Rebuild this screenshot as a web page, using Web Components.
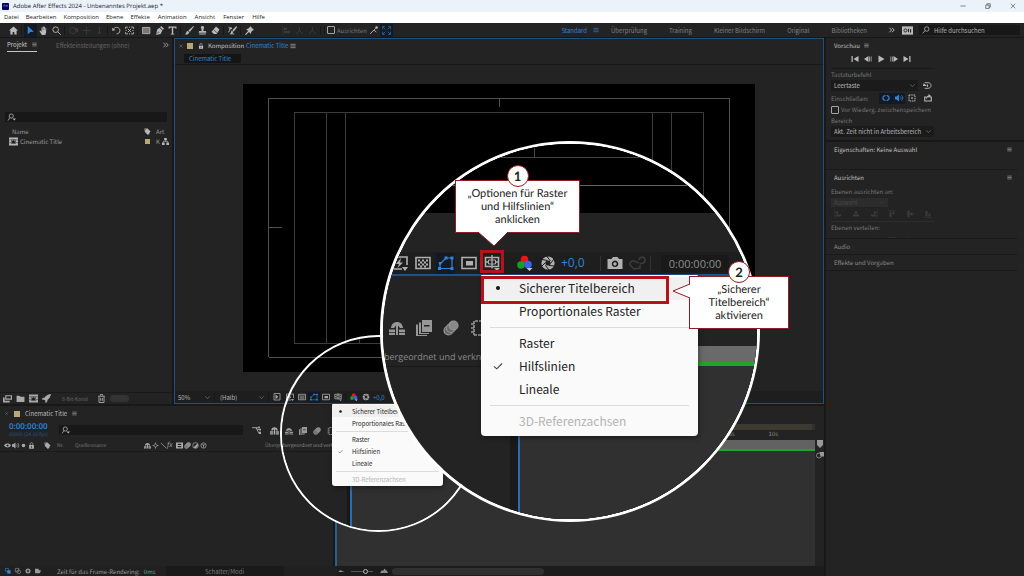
<!DOCTYPE html>
<html lang="de">
<head>
<meta charset="utf-8">
<title>Adobe After Effects 2024 - Unbenanntes Projekt.aep *</title>
<style>
  html, body { margin: 0; height: 100%; background: #232323; }
  body { overflow: hidden; }
</style>
</head>
<body>
<ae-app></ae-app>

<script>
const BASE = `
  *, *::before, *::after { box-sizing: border-box; }
  button, input, select { font: inherit; color: inherit; background: none; border: 0; margin: 0; padding: 0; border-radius: 0; outline: 0; appearance: none; min-width: 0; }
  button { display: block; text-align: left; white-space: nowrap; }
  [hidden] { display: none; }
`;

function define(name, css, html) {
  customElements.define(name, class extends HTMLElement {
    constructor() {
      super();
      const t = document.createElement('template');
      const body = typeof html === 'function' ? html(this) : html;
      t.innerHTML = `<style>${BASE}${css}</style>${body}`;
      this.attachShadow({ mode: 'open' }).append(t.content.cloneNode(true));
    }
  });
}

/* ---------- icons, all on a 16 x 16 grid ---------- */
const S = 'fill="none" stroke="currentColor" stroke-width="1.6"';
const ICONS = {
  home: '<path fill="currentColor" d="M8 1 0 8h2.500v7h4v-4.500h3V15h4V8H16z"/>',
  arrow: '<path fill="currentColor" d="M3 0v15l4.500-4.200L14 10z"/>',
  hand: '<path fill="currentColor" d="M5 16 1 9.500c-.6-1.500 1-2 1.700-1.200L4.500 10V3c0-1.300 1.700-1.300 1.700 0v4h.5V1.300C6.700 0 8.500 0 8.500 1.300V7H9V2c0-1.300 1.700-1.300 1.700 0v5.500h.6V4c0-1.200 1.700-1.200 1.700 0l-.4 8L11 16z"/>',
  zoom: `<circle cx="6.500" cy="6.500" r="5" ${S}/><path d="m10 10 5.500 5.500" ${S} stroke-width="2"/>`,
  orbit: `<circle cx="7" cy="8" r="5.500" ${S}/><path fill="currentColor" d="M8 4h8v8z"/>`,
  plus: `<path d="M8 1v14M1 8h14" ${S} stroke-width="2"/>`,
  down: `<path d="M8 1v13M4.500 10 8 14l3.500-4" ${S} stroke-width="2"/>`,
  rotate: `<path d="M3 5c4-5 11-2 11 3 0 4-3 6-6 6" ${S} stroke-width="2"/><path fill="currentColor" d="M0 3l1 6 5-2z"/>`,
  anchor: `<path d="M1 5V2h4M11 2h4v3M15 11v3h-4M5 14H1v-3" ${S}/><path d="M7 2h2M7 14h2M1 8h2m10 0h2M5 5l6 6M11 5l-6 6" ${S}/>`,
  rect: '<path fill="#777" stroke="currentColor" stroke-width="1.500" d="M1 2.500h13v11H1z"/>',
  pen: '<path fill="currentColor" d="M11 0l5 5-2 2-5-5zM8 3l5 5-3 6-9 2 5-5 1 1 1-1-1-1-1 0-4 4 2-8z"/>',
  type: '<path fill="currentColor" d="M1 1h14v4h-1.500L13 3H9.300v10.500L11 14v1H5v-1l1.700-.5V3H3l-.5 2H1z"/>',
  brush: '<path fill="currentColor" d="M15 0 6 8l2.500 2.500L16 1zM5 9c-3 0-2 4-5 6 4 1 7-1 7.500-4z"/>',
  stamp: '<path fill="currentColor" d="M8 0c3 0 3.500 3 2 5l-.5 4H14l1 3H1l1-3h4.500L6 5C4.500 3 5 0 8 0zM2 13.500h12V15H2z"/>',
  eraser: '<path fill="currentColor" d="M9 1l6 5-5 8H5L1 10z"/><path d="M4.500 6.500l6 5.500" stroke="#232323" stroke-width="1"/>',
  roto: `<path d="M1 2c4 0 2 9-1 9M4 14h7" ${S}/><path fill="currentColor" d="M15 0 8 7l2 3 6-8zM7 8c-2 1-1 4-3 6 3 0 5-1 5-4z"/><circle cx="5" cy="4" r="2" fill="currentColor"/>`,
  pin: '<path fill="currentColor" d="M9 0l7 7-2 .6-3 3-.5 3.400L7 10.500 1.500 16 0 15l5.500-6L2 5.500 5.500 5l3-3z"/>',
  axis: `<path d="M8 2v6L2 14M8 8l6 6" ${S}/>`,
  snap: `<path d="M2 14 9 7l4 4M9 7l3-3" ${S}/><circle cx="13.500" cy="2.500" r="2.200" fill="currentColor"/>`,
  expand: `<path d="M2 2l4 4M14 2l-4 4M2 14l4-4M14 14l-4-4M1 6V1h4M11 1h4v5M15 10v5h-4M5 15H1v-5" fill="none" stroke="currentColor" stroke-width="1.100"/>`,
  menu: `<path d="M1 3.500h14M1 8h14M1 12.500h14" ${S}/>`,
  more: `<path d="M1 2l6 6-6 6M8 2l6 6-6 6" fill="none" stroke="currentColor" stroke-width="2.600"/>`,
  sync: '<path fill="currentColor" d="M0 2h16v12H0z"/><path d="M9.500 5.500v5M12.500 6v5" stroke="#222" stroke-width="1.600"/><circle cx="5" cy="8" r="2.200" fill="none" stroke="#222" stroke-width="1.400"/>',
  search: `<circle cx="9.500" cy="6" r="4.500" ${S}/><path d="M6.500 9 1 15" ${S} stroke-width="2"/>`,
  searchmenu: `<circle cx="6.500" cy="6" r="4.200" ${S}/><path d="M4 9 0 15" ${S} stroke-width="2"/><path fill="currentColor" d="M9 11h7l-3.500 4z"/>`,
  chevron: `<path d="M3 5.500 8 10.500l5-5" ${S}/>`,
  close: `<path d="M4 4l8 8M12 4l-8 8" ${S}/>`,
  winclose: '<path d="M2 2l12 12M14 2 2 14" fill="none" stroke="currentColor" stroke-width="1.500"/>',
  winmin: '<path d="M1 8h14" stroke="currentColor" stroke-width="1.500"/>',
  winmax: '<path d="M2 5.500h9v9H2zM5 5V2h9v9h-3" fill="none" stroke="currentColor" stroke-width="1.600"/>',
  lock: `<path fill="currentColor" fill-rule="evenodd" d="M2.500 7h11v8.500h-11zM7 9.500v3.500h2V9.500z"/><path d="M5 7V4c0-3.500 6-3.500 6 0v3" ${S} stroke-width="2"/>`,
  tag: '<path fill="currentColor" fill-rule="evenodd" d="M1 1h7l7 7-2 2-1-1 1 3-4 4-7-7zM4 3a1 1 0 1 0 .1 0z"/>',
  comp: '<path fill="currentColor" fill-rule="evenodd" d="M0 1h16v14H0zM4 4v8h8V4zM1 4v2h1.500V4zm0 5v2h1.500V9zm12.500-5v2H15V4zm0 5v2H15V9z"/><path fill="#777" d="M4 4h8v8H4z"/><path fill="#222" d="M5 7h2l1-2 2 3 1-1v4H5z"/>',
  tree: `<path fill="currentColor" d="M5 0h6v5H5zM0 10h6v6H0zM10 10h6v6h-6z"/><path d="M8 5v3M3 10V7.500h10V10" ${S}/>`,
  footage: '<path fill="currentColor" fill-rule="evenodd" d="M4 2h12v8H4zM6 4v4h8V4zM0 6h3v6h9v3H0z"/>',
  folder: '<path fill="currentColor" d="M1 3h5l2 2h7v9H1z"/>',
  rocket: '<path fill="currentColor" d="M16 0C9 1 6 4 5 6L1 7l-1 3 4 0 2 2v4l3-2 1-4c3-2 5-5 6-10z"/>',
  trash: `<path d="M2 4h12M6 3V1h4v2M3.500 4.500V15h9V4.500M6.500 7v5M9.500 7v5" ${S}/>`,
  bolt: `<path d="M1 2h14v8M10 14H1V2" ${S}/><path fill="currentColor" d="M9 3 4 9h3l-1.500 4L11 7.500H8zM10 12h6l-3 4z"/>`,
  cursorbox: `<path d="M2 1h12v13H2z" ${S}/><path fill="currentColor" d="M5 3l6 5H8l3 4-3-2-3 2z"/>`,
  checker: `<path d="M1 2.500h14v11H1z" ${S}/><path fill="currentColor" d="M3 4.500h2v2H3zm4 0h2v2H7zm4 0h2v2h-2zM5 6.500h2v2H5zm4 0h2v2H9zM3 8.500h2v2H3zm4 0h2v2H7zm4 0h2v2h-2zM5 10.500h2v2H5zm4 0h2v2H9z"/>`,
  mask: `<path d="M2 13.500V9L8 3h6v10.500z" fill="none" stroke="currentColor" stroke-width="1.200"/><path fill="currentColor" d="M0 12h3v3H0zM12.500 1.500h3v3h-3zM12.500 12h3v3h-3zM6.500 1.500h3v3h-3zM.8 7h2.500v2.500H.8z"/>`,
  roi: `<path d="M1 2.500h14v11H1z" ${S}/><path fill="currentColor" d="M5 6h7v4.500H5z"/>`,
  grid: `<path d="M1.500 2.500h13v9h-13z" ${S}/><path d="M8 0v13.500M2 7h2.500M11.500 7H14" fill="none" stroke="currentColor" stroke-width="1.300"/><path d="M4.500 5h7v4h-7z" fill="none" stroke="currentColor" stroke-width="1"/><path fill="currentColor" d="M10 13h6l-3 3z"/>`,
  rgb: '<circle cx="7.500" cy="4.500" r="3.800" fill="#f01414"/><circle cx="4" cy="10" r="3.800" fill="#17a020"/><circle cx="11" cy="9.500" r="3.800" fill="#3465f0"/><path fill="#ccc" d="M9.500 13h6l-3 3z"/>',
  aperture: `<circle cx="8" cy="8" r="4.600" fill="none" stroke="currentColor" stroke-width="4"/><path d="M6.500 1l4 5M14 4l-3.500 4.500M14.500 11 9 10.500M9 15l-3.500-4.500M1.500 11.500 5.500 7.500M2 4.500l5.500 1" stroke="#1d1d1d" stroke-width="1"/>`,
  camera: '<path fill="currentColor" fill-rule="evenodd" d="M.5 4h4L6 2h4.500L12 4h3.500v10H.5zM8 5.500a3.300 3.300 0 1 0 .1 0zM8 7.200a1.700 1.700 0 1 1-.1 0z"/>',
  showsnap: `<path d="M9 5a3 3 0 1 1 4 3l-3 1M9 8 4 6a3 3 0 0 0-3 5l3 3 6-1 0-3" ${S}/>`,
  shy: '<path fill="currentColor" d="M2 8C2.500 0 13.500 0 14 8h-3L9 5.500V15H7V5.500L5 8zM0 9.500h6V12H0zM10 9.500h6V12h-6zM0 12.800h6V15H0zM10 12.800h6V15h-6z"/>',
  frameblend: '<path fill="currentColor" fill-rule="evenodd" d="M6 0h10v12H6zM8 5v1.500h5.500V5z"/><path fill="currentColor" d="M3 2.500h2v10.500h8v1H3zM0 4.500h2V15h9v1H0z"/>',
  blur: `<circle cx="5.500" cy="10.500" r="4.500" fill="#666" stroke="currentColor" stroke-width="1.200"/><circle cx="8" cy="8" r="4.500" fill="#666" stroke="currentColor" stroke-width="1.200"/><circle cx="10.500" cy="5.500" r="4.500" fill="#888" stroke="currentColor" stroke-width="1.200"/>`,
  flow: `<path d="M0 3h7l3 3M7 3h4M10 6h4M7 3l5 9h3" ${S} stroke-width="2"/><path fill="currentColor" d="M11 1h3v3h-3zM13 5h3v3h-3zM12 10h4v4h-4z"/>`,
  eye: '<path fill="currentColor" fill-rule="evenodd" d="M0 8c4-6 12-6 16 0-4 6-12 6-16 0zm8-2.500a2.500 2.500 0 1 0 .1 0z"/>',
  speaker: `<path fill="currentColor" d="M0 5h3l5-4v14l-5-4H0z"/><path d="M10.500 5c2 2 2 4 0 6M13 2.500c3.500 3 3.500 8 0 11" ${S}/>`,
  dot: '<circle cx="8" cy="8" r="4" fill="currentColor"/>',
  star: `<path d="M8 1v14M1 8h14" ${S}/><circle cx="8" cy="8" r="3.500" fill="#232323" stroke="currentColor" stroke-width="1.500"/>`,
  slash: `<path d="M2 2l12 12" ${S} stroke-width="2"/>`,
  film: '<path fill="currentColor" fill-rule="evenodd" d="M0 1h16v14H0zM4 4v3h8V4zm0 5v3h8V9z"/>',
  graph: `<path d="M5 1h10v4M1 4h3M1 8h3M1 12h3M4 15h11v-4M4 1v14" ${S} stroke-dasharray="3 1"/>`,
  half: `<circle cx="8" cy="8" r="6.500" ${S}/><path fill="currentColor" d="M3.500 12.500 12.500 3.500a6.500 6.500 0 0 1-9 9z"/>`,
  cube: `<circle cx="8" cy="8" r="6" ${S}/><path d="M4 6.500h8M8 7v6" ${S}/>`,
  layers: `<path d="M1 1h8v8H1z" ${S}/><path fill="currentColor" d="M6 6h9v9H6z"/>`,
  circles: `<path d="M1 1h9v9H1z" ${S}/><circle cx="10" cy="10" r="5" ${S}/>`,
  globe: `<circle cx="8" cy="8" r="5" fill="none" stroke="currentColor" stroke-width="3.500"/><path d="M2 8h12" ${S}/>`,
  clip: '<path fill="currentColor" d="M0 2h9l2 4h5l-3 8H0z"/>',
  hillsmall: '<path fill="currentColor" d="M2 10 7 6l3 2 5 2z"/>',
  hillbig: '<path fill="currentColor" d="M0 12 4 6l2 2 3-5 3 4 1-1 3 6z"/>',
  marker: '<path fill="currentColor" d="M2 0h12v10l-6 6-6-6z"/>',
  combutton: `<circle cx="6" cy="9" r="5" ${S}/><path fill="currentColor" d="M7 2h9v9H9z"/>`,
  first: '<path fill="currentColor" d="M1 2h2.500v12H1zM15 2v12L5 8z"/>',
  prev: '<path fill="currentColor" d="M9 2v12L0 8zM10.500 3H12v10h-1.500zM13.500 3H15v10h-1.500z"/>',
  play: '<path fill="currentColor" d="M3 1v14l12-7z"/>',
  next: '<path fill="currentColor" d="M7 2v12l9-6zM1 3h1.500v10H1zM4 3h1.500v10H4z"/>',
  last: '<path fill="currentColor" d="M12.500 2H15v12h-2.500zM1 2v12l10-6z"/>',
  reset: `<path d="M3 3h6c7 0 7 10 0 10H3" ${S} stroke-width="2.200"/><path fill="currentColor" d="M0 9 1 4l6 5zM7 6h2v4H7z"/>`,
  overlay: `<path d="M2 2h12v12H2z" fill="none" stroke="currentColor" stroke-width="2" stroke-dasharray="3 1.500"/><path fill="currentColor" d="M6.500 6.500h3v3h-3z"/>`,
  share: `<path d="M4 6H1.500v8h13V6H12M5 9c0-4 3-5 6-5" fill="none" stroke="currentColor" stroke-width="2.200"/><path fill="currentColor" d="M9 0l5 4-5 4z"/>`,
  loop: `<path d="M7 3C0 4 0 12 7 13M9 3c7 1 7 9 0 10" fill="none" stroke="currentColor" stroke-width="2.400"/>`,
  alignl: '<path fill="currentColor" d="M1 0h1v16H1zM3 3h6v4H3zm0 6h11v4H3z"/>',
  alignc: '<path fill="currentColor" d="M5 3h6v4H5zM2 9h12v4H2z"/>',
  alignr: '<path fill="currentColor" d="M14 0h1v16h-1zM7 3h6v4H7zM2 9h11v4H2z"/>',
  alignt: '<path fill="currentColor" d="M0 1h16v1H0zM3 3h4v11H3zm6 0h4v6H9z"/>',
  alignm: '<path fill="currentColor" d="M3 1h4v14H3zm6 4h4v6H9zM0 7.500h16v1H0z"/>',
  alignb: '<path fill="currentColor" d="M0 14h16v1H0zM3 2h4v11H3zm6 5h4v6H9z"/>',
  check: `<path d="M1.500 8.500 6 12.500 14.500 4" fill="none" stroke="currentColor" stroke-width="1.800"/>`,
};
define('ae-icon', ':host{display:block;flex:none;width:9px;height:9px} svg{display:block;width:100%;height:100%;overflow:visible}',
  el => `<svg viewBox="0 0 16 16" aria-hidden="true">${ICONS[el.getAttribute('name')] || ''}</svg>`);

define('ae-tool', `
  :host { display: block; flex: none; width: 13px; height: 13px; }
  button { display: grid; place-items: center; width: 100%; height: 100%; }
  ae-icon { width: var(--icon, 9px); height: var(--icon, 9px); }
  :host([active]) button { background: #131a24; color: #3484d6; }
  :host([dim]) button { color: #3b3b3b; }`,
  el => `<button type="button" aria-label="${el.getAttribute('label') || el.getAttribute('name')}"><ae-icon name="${el.getAttribute('name')}"></ae-icon></button>`);

define('ae-sep', ':host{display:block;flex:none;width:4px;height:9px;border-left:1px solid #171717;margin-left:1px;margin-right:-1px}', '');

define('ae-select', `
  :host { display: flex; align-items: center; position: relative; height: 11px; background: #1b1b1b; color: #b8b8b8; }
  select { flex: 1; width: 100%; height: 100%; padding: 0 10px 0 3px; }
  ae-icon { position: absolute; right: 2px; width: 7px; height: 7px; color: #777; pointer-events: none; }
  :host([disabled]) { background: #2c2c2c; color: #484848; }
  :host([disabled]) ae-icon { color: #3a3a3a; }
  select:disabled { opacity: 1; }`,
  el => `<select aria-label="${el.getAttribute('label')}" ${el.hasAttribute('disabled') ? 'disabled' : ''}><option>${el.getAttribute('value')}</option></select><ae-icon name="chevron"></ae-icon>`);

define('ae-search', `
  :host { display: flex; align-items: center; gap: 4px; height: 10px; background: #181818; color: #b4b4b4; padding: 0 3px; }
  input { flex: 1; height: 100%; }
  input::placeholder { color: #b4b4b4; opacity: 1; }
  ae-icon { width: 8px; height: 8px; }`,
  el => `<ae-icon name="${el.getAttribute('icon')}"></ae-icon><input type="search" aria-label="Suche" placeholder="${el.getAttribute('placeholder') || ''}">`);

define('ae-check', `
  :host { display: block; }
  label { display: flex; align-items: center; gap: 2px; color: #777; white-space: nowrap; }
  input { width: 8px; height: 8px; border: 1px solid #a4a4a4; border-radius: 1px; }`,
  '<label><input type="checkbox"><slot></slot></label>');

/* ---------- window chrome ---------- */
define('ae-titlebar', `
  :host { display: flex; align-items: center; height: 12px; padding: 0 10px 0 2px; gap: 4px; background: #ecf2fa; color: #222; font-family: var(--win-font); }
  .logo { width: 7px; height: 7px; border-radius: 1px; background: #00005b; color: #9999ff; font-size: 4px; line-height: 7px; text-align: center; }
  h1 { font: inherit; margin: 0; flex: 1; }
  .win { display: flex; gap: 12px; color: #333; --icon: 6px; }
  .win ae-tool:last-child { margin-right: -5px; }`,
  `<span class="logo">Ae</span><h1>Adobe After Effects 2024 - Unbenanntes Projekt.aep *</h1>
   <div class="win"><ae-tool name="winmin" label="Minimieren"></ae-tool><ae-tool name="winmax" label="Wiederherstellen"></ae-tool><ae-tool name="winclose" label="Schließen"></ae-tool></div>`);

define('ae-menubar', `
  :host { display: block; height: 11px; background: #fff; color: #222; font-family: var(--win-font); }
  nav { display: flex; gap: 7px; padding-left: 4px; height: 100%; align-items: center; }
  button:nth-child(n+6) { margin-left: 1px; }`,
  `<nav>${['Datei', 'Bearbeiten', 'Komposition', 'Ebene', 'Effekte', 'Animation', 'Ansicht', 'Fenster', 'Hilfe'].map(x => `<button type="button">${x}</button>`).join('')}</nav>`);

define('ae-toolbar', `
  :host { display: flex; align-items: center; height: 15px; padding: 0 4px 0 7px; background: #232323; border-bottom: 1px solid #171717; color: #b9b9b9; }
  .spaces { display: flex; align-items: center; gap: 22px; margin-left: auto; color: #808080; margin-right: 18px; }
  .spaces div { display: flex; align-items: center; gap: 6px; color: #3484d6; margin-right: -10px; }
  .spaces div ae-icon { width: 6px; height: 6px; }
  .gap { width: 24px; flex: none; }
  ae-search { width: 101px; margin-left: 5px; }`,
  `<ae-tool name="home"></ae-tool><ae-sep></ae-sep>
   <ae-tool name="arrow" active></ae-tool><ae-tool name="hand"></ae-tool><ae-tool name="zoom"></ae-tool><ae-sep></ae-sep>
   <ae-tool name="orbit" dim></ae-tool><ae-tool name="plus" dim></ae-tool><ae-tool name="down" dim></ae-tool><ae-sep></ae-sep>
   <ae-tool name="rotate"></ae-tool><ae-tool name="anchor"></ae-tool><ae-sep></ae-sep>
   <ae-tool name="rect"></ae-tool><ae-tool name="pen"></ae-tool><ae-tool name="type"></ae-tool><ae-sep></ae-sep>
   <ae-tool name="brush"></ae-tool><ae-tool name="stamp"></ae-tool><ae-tool name="eraser"></ae-tool><ae-sep></ae-sep>
   <ae-tool name="roto"></ae-tool><ae-sep></ae-sep><ae-tool name="pin"></ae-tool>
   <span class="gap"></span>
   <ae-tool name="alignl" dim></ae-tool><ae-tool name="axis" dim></ae-tool><ae-tool name="axis" dim></ae-tool><ae-sep></ae-sep><ae-sep></ae-sep>
   <ae-check>Ausrichten</ae-check><ae-tool name="snap"></ae-tool><ae-tool name="expand" active></ae-tool>
   <div class="spaces"><div><button type="button">Standard</button><ae-icon name="menu"></ae-icon></div>
     <button type="button">Überprüfung</button><button type="button">Training</button><button type="button">Kleiner Bildschirm</button><button type="button">Original</button><button type="button">Bibliotheken</button></div>
   <ae-tool name="more" style="--icon:6px"></ae-tool><ae-tool name="sync" style="--icon:11px;margin-left:3px"></ae-tool>
   <ae-search icon="search" placeholder="Hilfe durchsuchen"></ae-search>`);

/* ---------- project ---------- */
define('ae-project', `
  :host { display: flex; flex-direction: column; background: #232323; color: #9a9a9a; min-height: 0; }
  .tabs { display: flex; align-items: stretch; height: 14px; padding: 0 0 0 7px; gap: 19px; }
  .tab { display: flex; align-items: center; gap: 5px; color: #c4c4c4; border-bottom: 1px solid #c4c4c4; }
  .tab ae-icon { width: 5px; height: 5px; }
  .tabs > button { color: #666; flex: 1; }
  .info { height: 60px; }
  ae-search { margin: 0 5px; }
  table { border-collapse: collapse; width: 100%; margin-top: 4px; table-layout: fixed; }
  th, td { font-weight: normal; text-align: left; padding: 0; height: 10px; }
  th:first-child { padding-left: 12px; }
  td:first-child { padding-left: 9px; }
  td div { display: flex; align-items: center; gap: 2px; }
  .c2 { width: 12px; } .c3 { width: 16px; }
  .sw { display: block; width: 5px; height: 5px; background: #b8a878; margin-left: 1px; }
  th ae-icon { width: 7px; height: 7px; color: #b8b8b8; }
  td ae-icon { color: #b8b8b8; }
  footer { display: flex; align-items: center; height: 12px; margin-top: auto; border-top: 1px solid #1a1a1a; padding-left: 1px; color: #aaa; }
  footer > button { color: #666; margin: 0 7px 0 9px; font-size: 5px; }
  .bar { width: 19px; height: 7px; border-radius: 4px; background: #333; margin-left: 2px; }`,
  `<div class="tabs"><div class="tab"><button type="button">Projekt</button><ae-icon name="menu"></ae-icon></div><button type="button">Effekteinstellungen (ohne)</button><ae-tool name="more" style="--icon:6px"></ae-tool></div>
   <div class="info"></div>
   <ae-search icon="searchmenu"></ae-search>
   <table><colgroup><col><col class="c2"><col class="c3"></colgroup>
     <tr><th>Name</th><th><ae-icon name="tag"></ae-icon></th><th>Art</th></tr>
     <tr><td><div><ae-icon name="comp"></ae-icon>Cinematic Title</div></td><td><span class="sw"></span></td><td><div>K<ae-icon name="tree" style="width:7px;height:7px"></ae-icon></div></td></tr>
   </table>
   <footer><ae-tool name="footage"></ae-tool><ae-tool name="folder"></ae-tool><ae-tool name="comp"></ae-tool><ae-tool name="rocket"></ae-tool><button type="button">8-Bit-Kanal</button><ae-tool name="trash"></ae-tool><span class="bar"></span></footer>`);

/* ---------- composition viewer ---------- */
define('ae-viewer', `
  :host { display: flex; flex-direction: column; background: #232323; border: 1px solid #20507f; min-width: 0; color: #999; }
  .tab { display: flex; align-items: center; height: 13px; padding-left: 3px; gap: 4px; color: #c4c4c4; }
  .tab ae-icon { width: 6px; height: 6px; }
  .tab ae-icon:first-child { color: #777; margin-right: -1px; }
  .tab ae-icon:last-child { margin-left: -2px; }
  .sw { width: 6px; height: 6px; background: #b8a878; margin-right: 1px; }
  .tab button { color: #3484d6; margin-left: -2px; }
  .crumb { height: 13px; padding: 2px 9px; border-bottom: 1px solid #191919; }
  .crumb button { background: #151515; color: #3484d6; height: 9px; width: 57px; padding-left: 5px; }
  .area { flex: 1; display: grid; place-items: center; min-height: 0; }
  .canvas { display: block; width: 79%; max-height: 100%; background: #000; }
  .bar { display: flex; align-items: center; height: 12px; background: #1e1e1e; color: #a8a8a8; }
  .bar ae-select { background: none; }
  .bar ae-tool { width: 12px; height: 11px; --icon: 8px; }
  .bar > button { color: #3484d6; margin-left: 1px; }`,
  `<div class="tab"><ae-icon name="close"></ae-icon><span class="sw"></span><ae-icon name="lock"></ae-icon><span>Komposition</span><button type="button">Cinematic Title</button><ae-icon name="menu"></ae-icon></div>
   <div class="crumb"><button type="button">Cinematic Title</button></div>
   <div class="area"><svg class="canvas" viewBox="0 0 512 288" shape-rendering="crispEdges" fill="none" stroke="#3c3c3c">
     <path stroke="#505050" d="M25.500 14.500h461v259h-461zM256.500 14v9M25 143.500h14"/>
     <path d="M51.500 28.500h409v231h-409zM83.500 28v231M102.500 28v231M409.500 28v231M428.500 28v231M116.500 254v5"/></svg></div>
   <div class="bar"><ae-select value="50%" label="Vergrößerung" style="width:38px"></ae-select><ae-sep></ae-sep><ae-select value="(Halb)" label="Auflösung" style="width:50px"></ae-select><ae-sep></ae-sep>
     <ae-tool name="cursorbox"></ae-tool><ae-tool name="bolt" style="margin-left:1px"></ae-tool><ae-tool name="checker"></ae-tool><ae-tool name="mask" active></ae-tool><ae-tool name="roi"></ae-tool><ae-tool name="grid"></ae-tool><ae-sep></ae-sep>
     <ae-tool name="rgb"></ae-tool><ae-tool name="aperture"></ae-tool><button type="button">+0,0</button></div>`);

/* ---------- timeline ---------- */
define('ae-timeline', `
  :host { display: grid; grid-template: 1fr 10px / 337px 1fr; background: #232323; color: #8c8c8c; min-width: 0; }
  .left { border-right: 2px solid #2b5f94; box-shadow: inset -2px 0 #181818; overflow: hidden; }
  .tab { display: flex; align-items: center; height: 15px; gap: 5px; padding-left: 4px; color: #bbb; }
  .tab ae-icon { width: 5px; height: 5px; }
  .tab ae-icon:first-child { color: #777; }
  .sw { width: 6px; height: 6px; background: #b8a878; }
  .head { display: flex; align-items: center; height: 18px; padding-left: 9px; }
  .time { width: 50px; color: #24558c; font-size: 5px; line-height: 7px; flex: none; }
  .time b { display: block; color: #3484d6; font: 600 8px/8px "Open Sans", sans-serif; }
  .head ae-search { width: 184px; flex: none; }
  .head ae-tool { width: 14px; color: #aaa; }
  .cols { display: flex; align-items: center; height: 13px; padding-left: 3px; border-bottom: 1px solid #1a1a1a; white-space: nowrap; color: #777; font-size: 5px; }
  .cols ae-tool { width: 8px; --icon: 7px; color: #aaa; }
  .cols .name { width: 68px; }
  .cols .nr { width: 18px; }
  .cols i { width: 8px; font: italic 7px/9px "Open Sans", sans-serif; color: #aaa; }
  .cols .parent { margin-left: 58px; font-size: 5px; }
  .right { display: grid; grid-template-columns: 1fr 9px; }
  .track { display: flex; flex-direction: column; background: #303030; }
  .blank { height: 18px; background: #232323; }
  .work { height: 6px; background: #3c3a31; margin-right: 3px; }
  .ruler { background: #232323; height: 10px; display: flex; justify-content: flex-end; gap: 34px; padding-right: 37px; line-height: 7px; font-size: 6px; }
  .cache { height: 11px; background: #626262; border-bottom: 2px solid #1fa52a; }
  .side { padding-top: 34px; color: #999; display: grid; gap: 3px; align-content: start; justify-items: center; }
  .side ae-icon { width: 8px; height: 8px; }
  .foot { grid-column: 1 / -1; display: grid; grid-template-columns: 337px 1fr; background: #1c1c1c; }
  .foot > div { display: flex; align-items: center; }
  .foot .a { padding-left: 3px; background: #202020; color: #999; }
  .foot .a ae-tool { width: 10px; height: 9px; --icon: 6px; }
  .foot .a > button { height: 100%; }
  .foot .a .msg { margin-left: 14px; }
  .foot .modi { width: 118px; text-align: center; background: #1a1a1a; color: #777; margin-left: 10px; }
  .ms { color: #3fb8a0; margin-left: 4px; }
  .foot ae-icon { width: 8px; height: 8px; }
  input[type=range] { appearance: none; width: 22px; height: 7px; margin: 0 7px 0 6px; background: linear-gradient(#555, #555) center / 100% 1px no-repeat; }
  input[type=range]::-webkit-slider-thumb { appearance: none; width: 5px; height: 5px; border: 1px solid #bbb; border-radius: 50%; background: #1c1c1c; }
  .scroll { width: 152px; height: 7px; border-radius: 4px; background: #303030; margin-left: 4px; }`,
  `<div class="left">
     <div class="tab"><ae-icon name="close"></ae-icon><span class="sw"></span><button type="button">Cinematic Title</button><ae-icon name="menu"></ae-icon></div>
     <div class="head"><div class="time"><b>0:00:00:00</b>00000 (24.00 fps)</div><ae-search icon="searchmenu"></ae-search>
       <ae-tool name="flow" style="margin-left:6px;margin-right:4px"></ae-tool><ae-tool name="shy"></ae-tool><ae-tool name="shy"></ae-tool><ae-tool name="frameblend"></ae-tool><ae-tool name="blur"></ae-tool></div>
     <div class="cols"><ae-tool name="eye"></ae-tool><ae-tool name="speaker"></ae-tool><ae-tool name="dot"></ae-tool><ae-tool name="lock" style="margin-right:8px"></ae-tool><ae-tool name="tag" style="margin-right:6px"></ae-tool><span class="nr">Nr.</span><span class="name">Quellenname</span>
       ${['shy', 'star', 'slash', 'fx', 'film', 'blur', 'half', 'cube'].map(n => n === 'fx' ? '<i>fx</i>' : `<ae-tool name="${n}"></ae-tool>`).join('')}
       <span class="parent">Überge</span></div>
   </div>
   <div class="right"><div class="track"><div class="blank"></div><div class="work"></div><div class="ruler"><span>08s</span><span>10s</span></div><div class="cache"></div></div>
     <div class="side"><ae-icon name="marker"></ae-icon><ae-icon name="combutton"></ae-icon></div></div>
   <div class="foot"><div class="a"><ae-tool name="layers" style="color:#3484d6"></ae-tool><ae-tool name="circles"></ae-tool><ae-tool name="globe"></ae-tool><ae-tool name="clip"></ae-tool>
       <span class="msg">Zeit für das Frame-Rendering:</span><span class="ms">0ms</span><button type="button" class="modi">Schalter/Modi</button></div>
     <div><ae-icon name="hillsmall"></ae-icon><input type="range" aria-label="Zoom" min="0" max="100" value="70"><ae-icon name="hillbig"></ae-icon><span class="scroll"></span></div></div>`);

/* ---------- sidebar ---------- */
define('ae-preview', `
  :host { display: block; padding: 0 0 3px 5px; color: #777; border-bottom: 2px solid #181818; }
  h2 { font: inherit; margin: 0; display: flex; align-items: center; gap: 4px; height: 14px; padding-left: 3px; color: #c0c0c0; }
  h2 ae-icon { width: 5px; height: 5px; }
  .body { width: 103px; display: flex; flex-direction: column; }
  .play { display: flex; justify-content: center; height: 17px; padding-bottom: 2px; align-items: center; border-bottom: 1px solid #1a1a1a; color: #bbb; --icon: 8px; padding-right: 4px; }
  .lab { height: 11px; line-height: 12px; display: block; }
  .row { display: flex; align-items: center; height: 11px; }
  .row ae-select { flex: 1; }
  .row ae-tool { margin-left: 3px; color: #bbb; height: 11px; }
  .row.inc { height: 14px; } .row.inc span { flex: 1; } .row.inc ae-tool { margin-left: 0; --icon: 8px; }
  .row.inc ae-tool:last-child { margin-left: 3px; }
  .lab.range { height: 12px; line-height: 13px; }`,
  `<h2>Vorschau<ae-icon name="menu"></ae-icon></h2>
   <div class="body"><div class="play"><ae-tool name="first"></ae-tool><ae-tool name="prev"></ae-tool><ae-tool name="play"></ae-tool><ae-tool name="next"></ae-tool><ae-tool name="last"></ae-tool></div>
   <span class="lab">Tastaturbefehl</span>
   <div class="row"><ae-select value="Leertaste" label="Tastaturbefehl"></ae-select><ae-tool name="reset"></ae-tool></div>
   <div class="row inc"><span>Einschließen:</span><ae-tool name="loop" active></ae-tool><ae-tool name="speaker" active></ae-tool><ae-tool name="overlay"></ae-tool><ae-tool name="share"></ae-tool></div>
   <ae-check>Vor Wiederg. zwischenspeichern</ae-check>
   <span class="lab range">Bereich</span>
   <ae-select value="Akt. Zeit nicht in Arbeitsbereich" label="Bereich"></ae-select></div>`);

define('ae-fold', `
  :host { display: block; padding: 0 12px 0 8px; border-bottom: 1px solid #191919; overflow: hidden; color: #777; margin-right: 7px; }
  h2 { font: inherit; margin: 0; display: flex; align-items: center; justify-content: space-between; height: 15px; color: var(--title, #c0c0c0); }
  h2 ae-icon { width: 5px; height: 5px; margin-right: -7px; }
  div { margin-left: -3px; }`,
  el => `<h2>${el.getAttribute('heading')}${el.hasAttribute('menu') ? '<ae-icon name="menu"></ae-icon>' : ''}</h2><div><slot></slot></div>`);

define('ae-align', `
  :host { display: block; padding-top: 1px; }
  span { display: block; height: 12px; line-height: 12px; }
  ae-select { width: 57px; height: 9px; }
  div { display: flex; gap: 5px; height: 15px; width: 103px; align-items: center; color: #4a4a4a; border-bottom: 1px solid #2e2e2e; }
  div:last-child { height: 5px; border: 0; overflow: hidden; align-items: flex-start; }
  ae-tool { --icon: 8px; }`,
  () => { const r = ['alignl', 'alignc', 'alignr', 'alignt', 'alignm', 'alignb'].map(n => `<ae-tool name="${n}" dim></ae-tool>`).join('');
    return `<span>Ebenen ausrichten an:</span><ae-select value="Auswahl" label="Ausrichten an" disabled></ae-select><div>${r}</div><span>Ebenen verteilen:</span><div>${r}</div>`; });

define('ae-sidebar', `
  :host { display: block; background: #232323; }`,
  `<ae-preview></ae-preview>
   <ae-fold heading="Eigenschaften: Keine Auswahl" menu style="height:28px"></ae-fold>
   <ae-fold heading="Ausrichten" menu style="height:69px"><ae-align></ae-align></ae-fold>
   <ae-fold heading="Audio" style="--title:#8a8a8a"></ae-fold>
   <ae-fold heading="Effekte und Vorgaben" style="--title:#8a8a8a"></ae-fold>`);

/* ---------- grid options menu ---------- */
define('grid-menu', `
  :host { --row: 12px; --gap: 4px; --mark: 20px; --tick: 5px; --dot: 5px; display: block; width: 111px; padding: 1px 0; background: #fafafa; color: #222; border-radius: 1px 1px 3px 3px; box-shadow: 1px 2px 5px #0006; font-size: 6px; }
  :host([large]) { --row: 23px; --gap: 9px; --mark: 38px; --tick: 10px; --dot: 8px; width: 217px; padding: 2px 0 3px; font-size: 12px; border-radius: 1px 1px 4px 4px; }
  button { display: grid; grid-template-columns: var(--mark) 1fr; align-items: center; width: 100%; height: var(--row); }
  :host([large]) button { padding-bottom: 2px; }
  button:first-child { background: #f0f0f0; }
  button ae-icon { justify-self: center; width: var(--tick); height: var(--tick); margin-right: 4px; color: #444; }
  button:first-child ae-icon { width: var(--dot); height: var(--dot); color: #111; }
  button:disabled { color: #b4b4b4; }
  hr { border: 0; margin: 0 4%; height: var(--gap); background: linear-gradient(#dcdcdc, #dcdcdc) center / 100% 1px no-repeat; }`,
  `<div role="menu">
   <button type="button" role="menuitemradio"><ae-icon name="dot"></ae-icon>Sicherer Titelbereich</button>
   <button type="button" role="menuitem"><span></span>Proportionales Raster</button><hr>
   <button type="button" role="menuitem"><span></span>Raster</button>
   <button type="button" role="menuitemcheckbox"><ae-icon name="check"></ae-icon>Hilfslinien</button>
   <button type="button" role="menuitem"><span></span>Lineale</button><hr>
   <button type="button" role="menuitem" disabled><span></span>3D-Referenzachsen</button></div>`);

/* ---------- magnifier circles ---------- */
define('ae-lens', `
  :host { display: block; position: absolute; border-radius: 50%; border: var(--ring) solid #fff; box-sizing: border-box; overflow: hidden; }`,
  '<slot></slot>');

define('lens-near', `
  :host { display: grid; grid-template: 68px 1fr / 70px 1fr; height: 100%; color: #8c8c8c; }
  .clear { grid-column: 1 / -1; }
  .left { background: #232323; border-right: 2px solid #2b6db0; box-shadow: inset -3px 0 #181818; padding-top: 20px; overflow: hidden; }
  .row { display: flex; height: 11px; align-items: center; }
  .row ae-tool { width: 14px; --icon: 8px; color: #999; }
  p { margin: 4px 0 0; padding-left: 1px; font-size: 5px; line-height: 11px; border-bottom: 1px solid #1a1a1a; white-space: nowrap; }
  .right { background: #303030; }`,
  `<div class="clear"></div><div class="left"><div class="row"><ae-tool name="shy"></ae-tool><ae-tool name="frameblend"></ae-tool><ae-tool name="blur"></ae-tool><ae-tool name="graph"></ae-tool></div><p>bergeordnet und verkn</p></div><div class="right"></div>`);

define('lens-far', `
  :host { display: flex; flex-direction: column; height: 100%; background: #232323; color: #a2a2a2; font-size: 11px; }
  svg.guides { display: block; height: 69px; width: 100%; background: #000; flex: none; }
  .pad { height: 39px; flex: none; }
  .bar { display: flex; align-items: center; height: 24px; flex: none; background: #1e1e1e; border-bottom: 2px solid #1d5189; padding-left: 5px; --icon: 16px; color: #b0b0b0; }
  .bar ae-tool { width: 23px; height: 21px; }
  .bar ae-tool[active] { width: 19px; margin: 0 2px; }
  .bar ae-sep { height: 15px; border-color: #333; margin: 0; }
  .bar i { width: 10px; }
  .bar > button { color: #3484d6; margin: 0 15px 0 2px; font: 12px/18px "Open Sans", sans-serif; }
  .bar .tc { background: #191919; color: #8e8e8e; padding: 0 8px; margin: 0 0 0 7px; font: 11px/17px "Open Sans", sans-serif; }
  .time { flex: 1; display: grid; grid-template-columns: 137px 1fr; }
  .left { border-right: 2px solid #2b6db0; box-shadow: inset -8px 0 #1a1a1a; padding-top: 39px; }
  .row { display: flex; height: 22px; align-items: center; --icon: 16px; color: #979797; }
  .row ae-tool { width: 27px; }
  p { margin: 10px 0 0; padding-left: 1px; line-height: 19px; border-bottom: 1px solid #1a1a1a; white-space: nowrap; color: #8a8a8a; font-family: "Open Sans", sans-serif; font-size: 9px; }
  .right { display: flex; flex-direction: column; background: #232323; }
  .blank { height: 70px; }
  .cache { height: 20px; background: #6a6a6a; border-bottom: 4px solid #1fa52a; }
  .rest { flex: 1; background: #303030; }`,
  `<svg class="guides" shape-rendering="crispEdges" fill="none"><path stroke="#444" d="M0 13.500h380M151.500 0v13"/><path stroke="#666" d="M0 41.500h380"/></svg>
   <div class="pad"></div>
   <div class="bar"><ae-tool name="bolt"></ae-tool><ae-tool name="checker"></ae-tool><ae-tool name="mask" active></ae-tool><ae-tool name="roi"></ae-tool><ae-tool name="grid"></ae-tool>
     <i></i><ae-tool name="rgb"></ae-tool><ae-tool name="aperture"></ae-tool><button type="button">+0,0</button><ae-sep></ae-sep>
     <ae-tool name="camera"></ae-tool><ae-tool name="showsnap" dim></ae-tool><ae-sep></ae-sep><button type="button" class="tc">0:00:00:00</button></div>
   <div class="time"><div class="left"><div class="row"><ae-tool name="shy"></ae-tool><ae-tool name="frameblend"></ae-tool><ae-tool name="blur"></ae-tool><ae-tool name="graph"></ae-tool></div><p>bergeordnet und verkn</p></div>
     <div class="right"><div class="blank"></div><div class="cache"></div><div class="rest"></div></div></div>`);

/* ---------- instruction callouts ---------- */
define('step-note', `
  :host { display: block; position: absolute; font: 11px/13px Lato, "Open Sans", sans-serif; color: #222; text-align: center; }
  .box { background: #fff; border: 1px solid #8f1d22; padding: 6px 8px; white-space: nowrap; }
  b { position: absolute; left: 50%; top: -15px; width: 22px; height: 22px; margin-left: -11px; border: 1px solid #8f1d22; border-radius: 50%; background: #fff; font-size: 13px; line-height: 20px; }
  svg { position: absolute; overflow: visible; fill: #fff; stroke: #8f1d22; }
  svg.d { left: 22px; bottom: -14px; width: 32px; height: 15px; }
  svg.l { left: -16px; top: 8px; width: 17px; height: 14px; }`,
  el => `<div class="box"><slot></slot></div>${el.getAttribute('point') === 'down'
    ? '<svg class="d" viewBox="0 0 32 15"><path d="M1 0l16 14L31 0"/></svg>'
    : '<svg class="l" viewBox="0 0 17 14"><path d="M17 0 0 7l17 7"/></svg>'}<b>${el.getAttribute('step')}</b>`);

define('ae-app', `
  :host { --win-font: "Open Sans", "Noto Sans", sans-serif; display: flex; flex-direction: column; position: relative; min-height: 100vh; background: #181818; font: 6px/9px "Noto Sans CJK SC", "Open Sans", sans-serif; text-rendering: geometricPrecision; overflow: hidden; }
  main { flex: 1; display: grid; grid-template-columns: 1fr 198px; gap: 2px; }
  .work { display: grid; grid-template: 1fr 170px / 172px 1fr; gap: 2px; min-width: 0; }
  ae-timeline { grid-column: 1 / -1; }
  .near { left: 280px; top: 335px; width: 197px; height: 197px; --ring: 2px; }
  .far { left: 380px; top: 141px; width: 380px; height: 381px; --ring: 3px; }
  .m1 { position: absolute; left: 332px; top: 404px; }
  .m2 { position: absolute; left: 481px; top: 275px; }
  .mark { position: absolute; border: 3px solid #b5121b; pointer-events: none; box-sizing: border-box; }
  .k1 { left: 480px; top: 250px; width: 24px; height: 23px; }
  .k2 { left: 481px; top: 276px; width: 188px; height: 28px; }
  .s1 { left: 455px; top: 180px; width: 125px; }
  .s2 { left: 689px; top: 276px; width: 100px; }`,
  `<ae-titlebar></ae-titlebar><ae-menubar></ae-menubar><ae-toolbar></ae-toolbar>
   <main><div class="work"><ae-project></ae-project><ae-viewer></ae-viewer><ae-timeline></ae-timeline></div><ae-sidebar></ae-sidebar></main>
   <ae-lens class="near"><lens-near></lens-near></ae-lens>
   <grid-menu class="m1"></grid-menu>
   <ae-lens class="far"><lens-far></lens-far></ae-lens>
   <grid-menu class="m2" large></grid-menu>
   <div class="mark k1"></div><div class="mark k2"></div>
   <step-note class="s1" step="1" point="down">„Optionen für Raster<br>und Hilfslinien“<br>anklicken</step-note>
   <step-note class="s2" step="2" point="left">„Sicherer<br>Titelbereich“<br>aktivieren</step-note>`);
</script>
</body>
</html>
